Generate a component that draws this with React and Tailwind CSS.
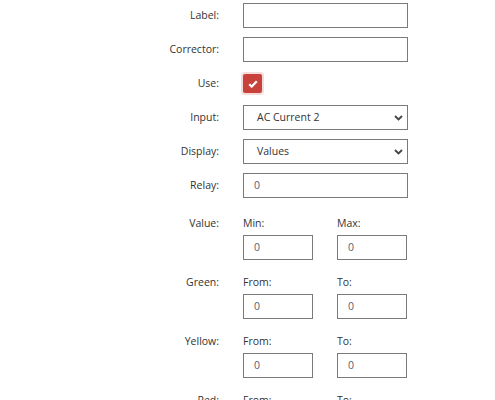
import React from 'react';

const font = { fontFamily: '"Open Sans", "Noto Sans", sans-serif' };

const TextRow = ({ label, children }) => (
  <div className="flex items-center h-[25px] mb-[9px]">
    <div className="w-[219px] text-right text-[10.5px] text-[#333]">{label}</div>
    <div className="ml-[24px]">{children}</div>
  </div>
);

const TextInput = ({ value = '', w = 'w-[165px]' }) => (
  <div className={`${w} h-[25px] border border-[#7a7a7a] bg-white flex items-center pl-[10px] text-[10.5px] text-[#556070]`}>
    {value}
  </div>
);

const Select = ({ value }) => (
  <div className="w-[165px] h-[25px] border border-[#7a7a7a] bg-white flex items-center justify-between pl-[13px] pr-[4px] text-[10.5px] text-[#333]">
    <span>{value}</span>
    <svg width="9" height="6" viewBox="0 0 9 6" fill="none">
      <path d="M1 1l3.5 3.5L8 1" stroke="#444" strokeWidth="1.8" />
    </svg>
  </div>
);

const PairRow = ({ label, left, right, last }) => (
  <div className={`flex ${last ? '' : 'mb-[13px]'}`}>
    <div className="w-[219px] text-right h-[18px] leading-[18px] text-[10.5px] text-[#333]">{label}</div>
    <div className="ml-[24px] flex gap-[24px]">
      {[left, right].map((sub) => (
        <div key={sub} className="w-[70px]">
          <div className="h-[18px] leading-[18px] text-[10.5px] text-[#333]">{sub}</div>
          <div className="mt-[3px]">
            <TextInput value="0" w="w-[70px]" />
          </div>
        </div>
      ))}
    </div>
  </div>
);

export default function App() {
  return (
    <div className="w-[495px] h-[400px] overflow-hidden bg-white pt-[3px]" style={font}>
      <TextRow label="Label:">
        <TextInput />
      </TextRow>
      <TextRow label="Corrector:">
        <TextInput />
      </TextRow>
      <TextRow label="Use:">
        <div className="w-[19px] h-[19px] rounded-[2px] bg-[#c8413b] ring-2 ring-[#f4dcda] flex items-center justify-center">
          <svg width="10" height="8" viewBox="0 0 10 8" fill="none">
            <path d="M1.2 4.2l2.5 2.4L8.8 1.2" stroke="#fff" strokeWidth="2.2" />
          </svg>
        </div>
      </TextRow>
      <TextRow label="Input:">
        <Select value="AC Current 2" />
      </TextRow>
      <TextRow label="Display:">
        <Select value="Values" />
      </TextRow>
      <TextRow label="Relay:">
        <TextInput value="0" />
      </TextRow>
      <div className="pt-[7px]">
        <PairRow label="Value:" left="Min:" right="Max:" />
        <PairRow label="Green:" left="From:" right="To:" />
        <PairRow label="Yellow:" left="From:" right="To:" />
        <PairRow label="Red:" left="From:" right="To:" last />
      </div>
    </div>
  );
}
